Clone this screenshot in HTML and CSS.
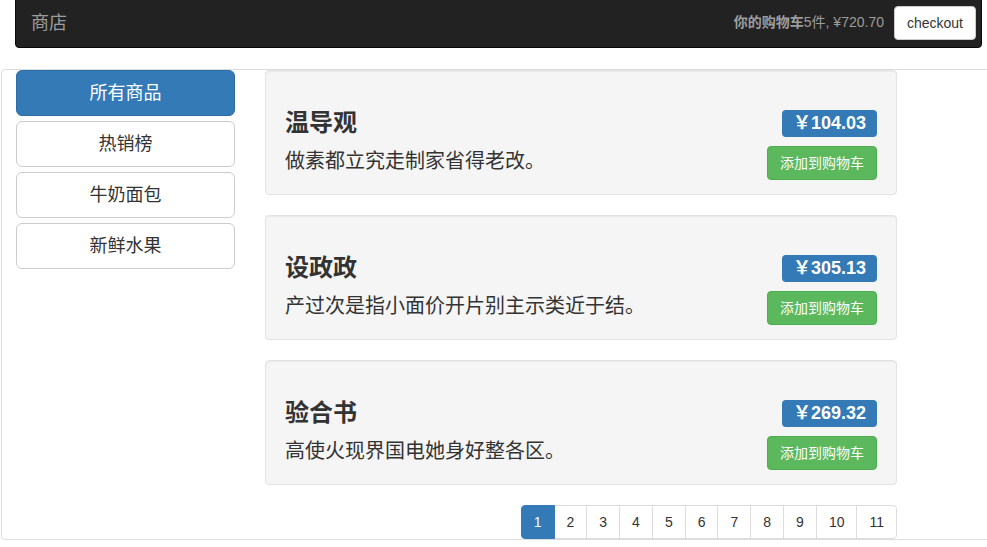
FILE: index.html
```html
<!DOCTYPE html>
<html lang="zh-CN">
<head>
<meta charset="utf-8">
<title>商店</title>
<link rel="stylesheet" href="styles.css">
</head>
<body>
<nav class="navbar">
  <div class="brand">商店</div>
  <div class="nav-right">
    <div class="cart"><b>你的购物车</b>5件, ¥720.70</div>
    <button class="btn-checkout">checkout</button>
  </div>
</nav>
<div class="panel">
  <aside class="sidebar">
    <button class="cat active">所有商品</button>
    <button class="cat">热销榜</button>
    <button class="cat">牛奶面包</button>
    <button class="cat">新鲜水果</button>
  </aside>
  <main class="main">
    <div class="well">
      <div class="row-title">
        <h3>温导观</h3>
        <span class="price">￥104.03</span>
      </div>
      <div class="row-desc">
        <h4>做素都立究走制家省得老改。</h4>
        <button class="btn-add">添加到购物车</button>
      </div>
    </div>
    <div class="well">
      <div class="row-title">
        <h3>设政政</h3>
        <span class="price">￥305.13</span>
      </div>
      <div class="row-desc">
        <h4>产过次是指小面价开片别主示类近于结。</h4>
        <button class="btn-add">添加到购物车</button>
      </div>
    </div>
    <div class="well">
      <div class="row-title">
        <h3>验合书</h3>
        <span class="price">￥269.32</span>
      </div>
      <div class="row-desc">
        <h4>高使火现界国电她身好整各区。</h4>
        <button class="btn-add">添加到购物车</button>
      </div>
    </div>
    <ul class="pagination">
      <li class="active">1</li>
      <li>2</li>
      <li>3</li>
      <li>4</li>
      <li>5</li>
      <li>6</li>
      <li>7</li>
      <li>8</li>
      <li>9</li>
      <li>10</li>
      <li>11</li>
    </ul>
  </main>
</div>
</body>
</html>
```

FILE: styles.css
```css
* { box-sizing: border-box; }
html, body {
  margin: 0;
  overflow: hidden;
}
body {
  font-family: "Liberation Sans", "Noto Sans CJK SC", sans-serif;
  font-size: 14px;
  line-height: 1.42857;
  color: #333;
  background: #fff;
}
button { font-family: inherit; cursor: pointer; }

.navbar {
  margin: -2px 5px 0 15px;
  height: 50px;
  background: #222;
  border: 1px solid #080808;
  border-radius: 0 0 4px 4px;
  display: flex;
  align-items: center;
  justify-content: space-between;
}
.brand {
  padding-left: 15px;
  font-size: 18px;
  line-height: 20px;
  color: #9d9d9d;
}
.nav-right {
  display: flex;
  align-items: center;
}
.cart {
  color: #9d9d9d;
  font-size: 14px;
  margin-right: 10px;
}
.cart b { font-weight: bold; }
.btn-checkout {
  margin-right: 5px;
  height: 34px;
  padding: 6px 12px;
  font-size: 14px;
  line-height: 20px;
  color: #333;
  background: #fff;
  border: 1px solid #ccc;
  border-radius: 4px;
}

.panel {
  margin: 21px -10px 0 1px;
  border: 1px solid #ddd;
  border-radius: 4px;
  display: flex;
  align-items: flex-start;
}
.sidebar {
  width: 219px;
  margin-left: 14px;
  display: flex;
  flex-direction: column;
  gap: 5px;
}
.cat {
  height: 46px;
  padding: 10px 16px;
  font-size: 18px;
  line-height: 24px;
  color: #333;
  background: #fff;
  border: 1px solid #ccc;
  border-radius: 6px;
  text-align: center;
}
.cat.active {
  color: #fff;
  background: #337ab7;
  border-color: #2e6da4;
}

.main {
  width: 632px;
  margin-left: 30px;
  display: flex;
  flex-direction: column;
  gap: 20px;
}
.well {
  height: 125px;
  padding: 19px;
  background: #f5f5f5;
  border: 1px solid #e3e3e3;
  border-radius: 4px;
  box-shadow: inset 0 1px 1px rgba(0,0,0,.05);
}
.row-title {
  margin-top: 20px;
  height: 26px;
  display: flex;
  justify-content: space-between;
  align-items: flex-start;
}
.row-title h3 {
  margin: 0;
  font-size: 24px;
  line-height: 26px;
  font-weight: bold;
  color: #333;
}
.price {
  display: inline-block;
  font-size: 18px;
  font-weight: bold;
  line-height: 1;
  padding: 4px 11px 5px;
  color: #fff;
  background: #337ab7;
  border-radius: 4px;
}
.row-desc {
  margin-top: 10px;
  height: 20px;
  display: flex;
  justify-content: space-between;
  align-items: flex-start;
}
.row-desc h4 {
  margin: 4px 0 0;
  font-size: 20px;
  line-height: 22px;
  font-weight: normal;
  color: #333;
}
.btn-add {
  flex: none;
  height: 34px;
  padding: 6px 12px;
  font-size: 14px;
  line-height: 20px;
  color: #fff;
  background: #5cb85c;
  border: 1px solid #4cae4c;
  border-radius: 4px;
}

.pagination {
  list-style: none;
  margin: 0;
  padding: 0;
  display: flex;
  justify-content: flex-end;
}
.pagination li {
  padding: 6px 12px;
  line-height: 20px;
  font-size: 14px;
  color: #333;
  background: #fff;
  border: 1px solid #ddd;
  margin-left: -1px;
}
.pagination li:first-child {
  border-radius: 4px 0 0 4px;
}
.pagination li:last-child {
  border-radius: 0 4px 4px 0;
}
.pagination li.active {
  color: #fff;
  background: #337ab7;
  border-color: #337ab7;
  position: relative;
}
```
